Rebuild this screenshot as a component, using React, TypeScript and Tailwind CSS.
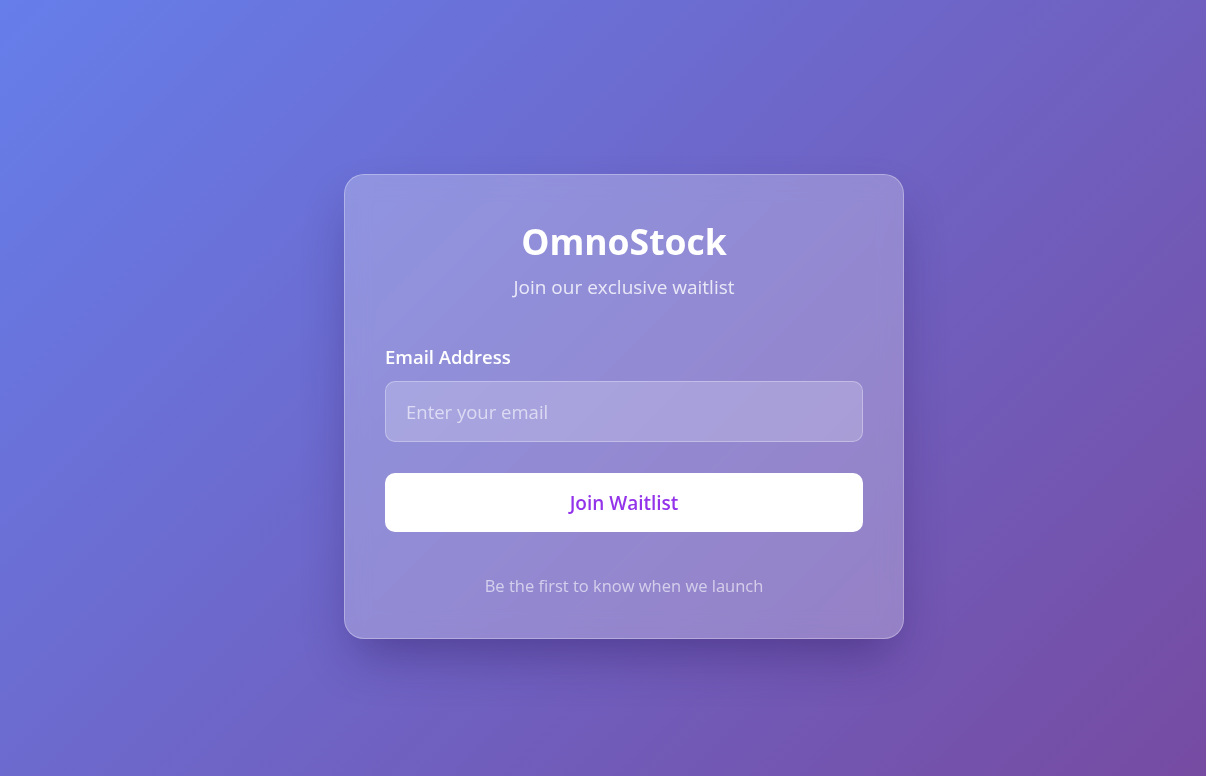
export default function App() {
  return (
    <div className="min-h-screen w-full flex items-center justify-center bg-[linear-gradient(135deg,#667eea_0%,#764ba2_100%)] pl-[42px] pt-[36px] font-['Open_Sans',sans-serif]">
      <div className="w-[560px] rounded-[20px] border border-white/30 bg-white/25 p-10 shadow-[0_25px_50px_-12px_rgba(40,20,90,0.45)] backdrop-blur-md">
        <div className="text-center">
          <h1 className="text-[35.5px] font-bold leading-[52px] text-white">OmnoStock</h1>
          <p className="mt-[6px] text-[19px] leading-7 text-white/80">Join our exclusive waitlist</p>
        </div>

        <form className="mt-[42px]" onSubmit={(e) => e.preventDefault()}>
          <label className="block text-[18.5px] font-semibold leading-7 text-white">Email Address</label>
          <input
            type="email"
            placeholder="Enter your email"
            className="mt-[10px] h-[61px] w-full rounded-[10px] border border-white/30 bg-white/20 px-5 text-[18.5px] text-white placeholder:text-white/60 outline-none"
          />
          <button
            type="submit"
            className="mt-[31px] h-[59px] w-full rounded-[10px] bg-white pt-[3px] text-[19px] font-semibold text-[#9333ea]"
          >
            Join Waitlist
          </button>
        </form>

        <p className="mt-[42px] text-center text-[16.5px] leading-6 text-white/60">Be the first to know when we launch</p>
      </div>
    </div>
  );
}
